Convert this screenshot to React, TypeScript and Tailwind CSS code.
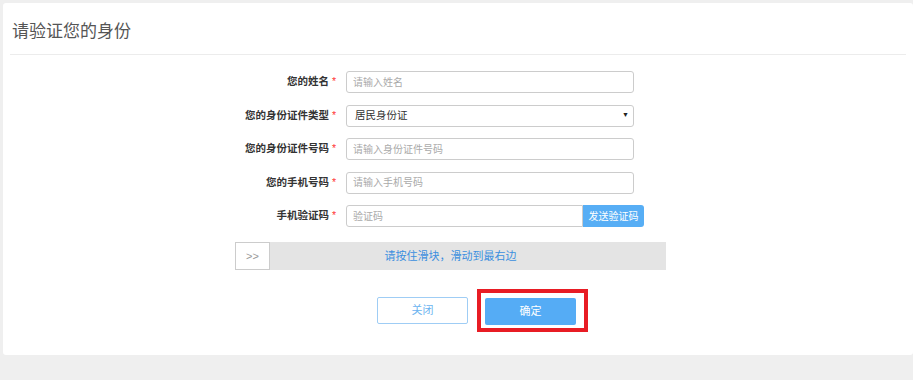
import { useState } from 'react'

const font = { fontFamily: '"Liberation Sans", "Noto Sans CJK SC", sans-serif' }

function Label({ text }: { text: string }) {
  return (
    <div className="w-[343px] shrink-0 pr-[10px] text-right text-[10.5px] font-bold text-[#333]">
      {text}
      <span className="ml-[3px] font-normal text-[#f33]">*</span>
    </div>
  )
}

const inputCls =
  'h-[22px] rounded-[3px] border border-[#ccc] px-[6px] text-[10px] text-[#555] outline-none placeholder:text-[#aaa]'

export default function App() {
  const [idType, setIdType] = useState('居民身份证')

  return (
    <div className="h-[380px] w-[913px] bg-[#efefef] pl-[3px] pt-[3px]" style={font}>
      <div className="h-[352px] rounded-[3px] bg-white">
        <div className="mx-[7px] flex h-[52px] items-center border-b border-[#ececec] pl-[2px] pt-[7px] text-[17px] text-[#555]">
          请验证您的身份
        </div>

        <div className="flex flex-col gap-[11.5px] pt-[16px]">
          <div className="flex items-center">
            <Label text="您的姓名" />
            <input className={`${inputCls} w-[288px]`} placeholder="请输入姓名" />
          </div>
          <div className="flex items-center">
            <Label text="您的身份证件类型" />
            <div className="relative flex h-[22px] w-[288px] items-center rounded-[3px] border border-[#ccc] px-[8px] text-[10.5px] text-[#333]">
              {idType}
              <span className="absolute right-[4px] text-[7px] text-[#222]">▼</span>
              <select
                className="absolute inset-0 opacity-0"
                value={idType}
                onChange={(e) => setIdType(e.target.value)}
              >
                <option>居民身份证</option>
                <option>护照</option>
              </select>
            </div>
          </div>
          <div className="flex items-center">
            <Label text="您的身份证件号码" />
            <input className={`${inputCls} w-[288px]`} placeholder="请输入身份证件号码" />
          </div>
          <div className="flex items-center">
            <Label text="您的手机号码" />
            <input className={`${inputCls} w-[288px]`} placeholder="请输入手机号码" />
          </div>
          <div className="flex items-center">
            <Label text="手机验证码" />
            <input className={`${inputCls} w-[237px] rounded-r-none`} placeholder="验证码" />
            <button className="h-[22px] w-[61px] rounded-r-[3px] bg-[#57aef5] text-[10px] text-white">
              发送验证码
            </button>
          </div>
        </div>

        <div className="relative ml-[232px] mt-[15px] flex h-[28px] w-[431px] items-center justify-center bg-[#e4e4e4]">
          <div className="absolute inset-y-0 left-0 flex w-[35px] items-center justify-center border border-[#ccc] bg-white text-[11px] text-[#999]">
            &gt;&gt;
          </div>
          <span className="text-[11px] text-[#3b8fdf]">请按住滑块，滑动到最右边</span>
        </div>

        <div className="ml-[374px] mt-[19px] flex items-center gap-[9px]">
          <button className="h-[27px] w-[91px] rounded-[2px] border border-[#9fcdf5] bg-white text-[11px] text-[#6cb4f0]">
            关闭
          </button>
          <div className="border-[4px] border-[#e81c24] pb-[3px] pl-[4px] pr-[8px] pt-[5px]">
            <button className="block h-[27px] w-[91px] rounded-[2px] bg-[#55acf5] text-[11px] text-white">
              确定
            </button>
          </div>
        </div>
      </div>
    </div>
  )
}
